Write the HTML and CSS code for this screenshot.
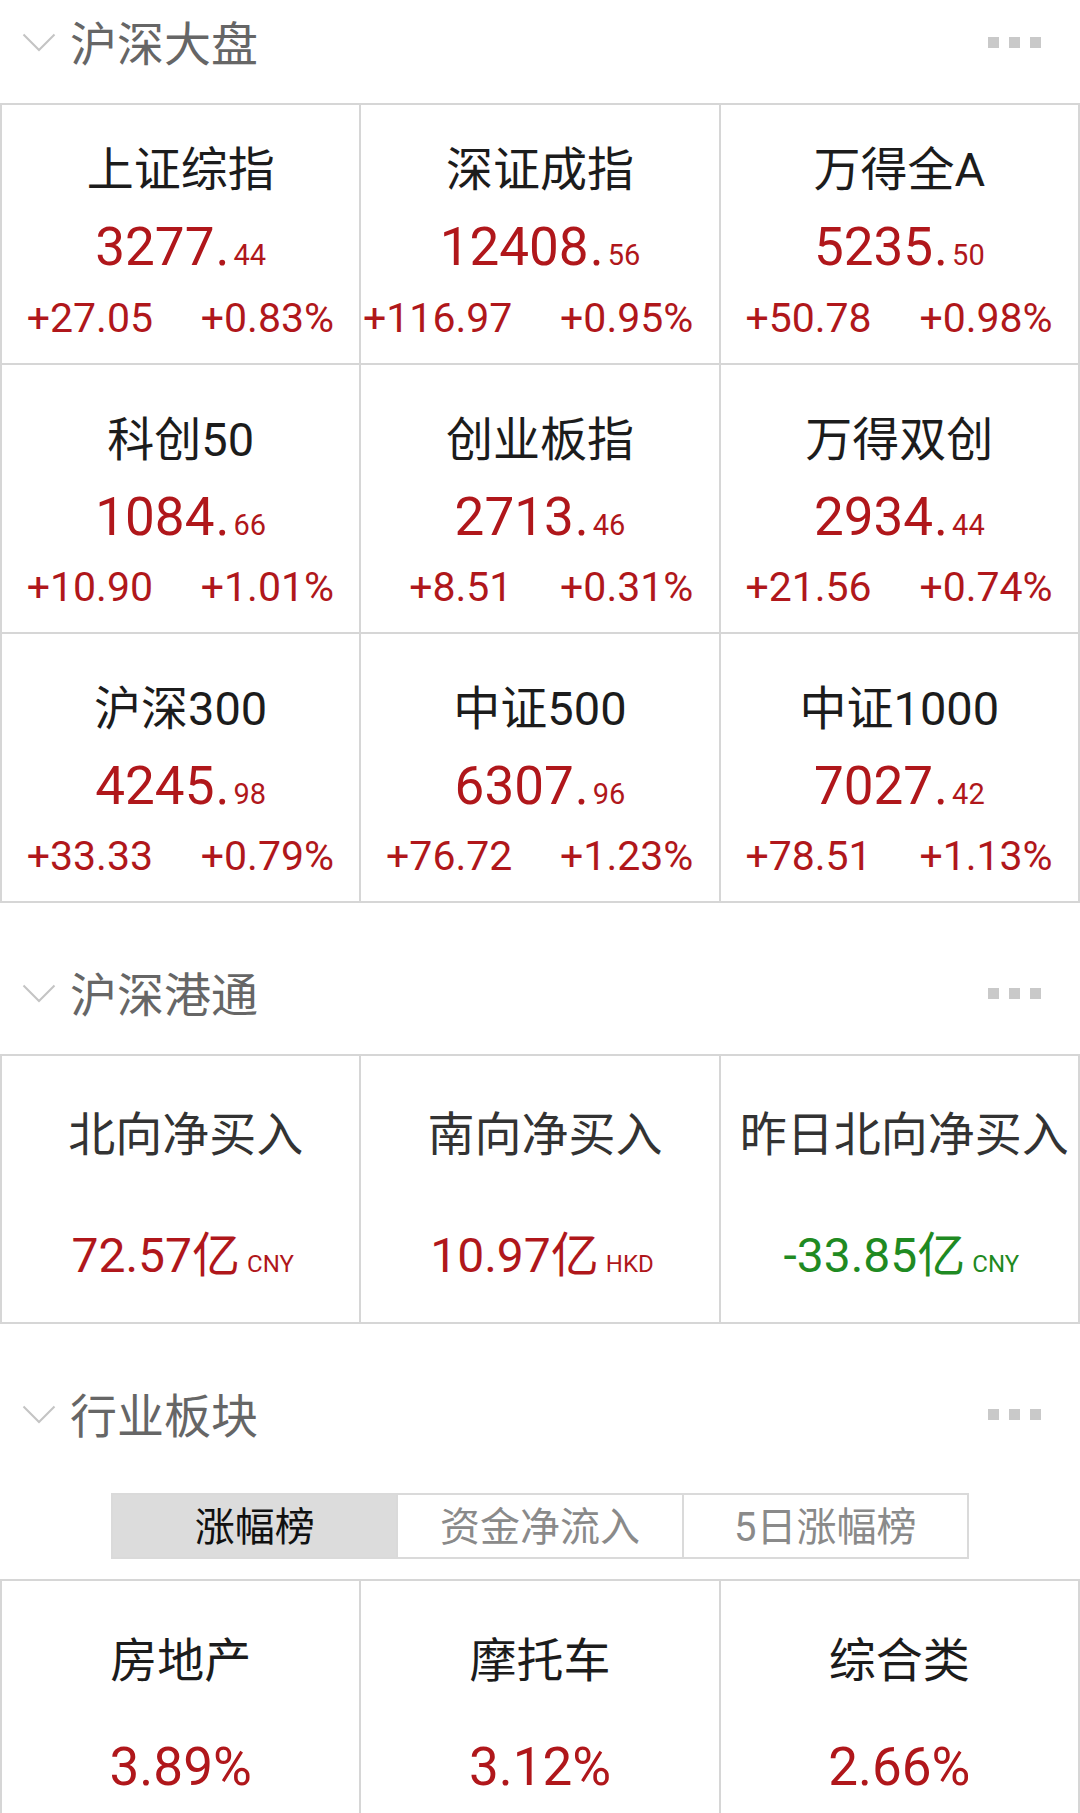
FILE: index.html
```html
<!DOCTYPE html>
<html lang="zh-CN">
<head>
<meta charset="utf-8">
<title>行情</title>
<link rel="stylesheet" href="styles.css">
</head>
<body>
<div class="page">

  <section class="section">
    <div class="sec-head">
      <svg class="chev" viewBox="0 0 34 19"><polyline points="1.5,1.5 17,17 32.5,1.5"/></svg>
      <div class="sec-title">沪深大盘</div>
      <div class="more"><i></i><i></i><i></i></div>
    </div>
    <div class="grid idx">
      <div class="cell r1"><div class="name">上证综指</div><div class="val"><span class="int">3277</span><span class="pt">.</span><span class="dec">44</span></div><div class="chg"><span>+27.05</span><span>+0.83%</span></div></div>
      <div class="cell r1"><div class="name">深证成指</div><div class="val"><span class="int">12408</span><span class="pt">.</span><span class="dec">56</span></div><div class="chg"><span>+116.97</span><span>+0.95%</span></div></div>
      <div class="cell r1"><div class="name">万得全A</div><div class="val"><span class="int">5235</span><span class="pt">.</span><span class="dec">50</span></div><div class="chg"><span>+50.78</span><span>+0.98%</span></div></div>

      <div class="cell"><div class="name">科创50</div><div class="val"><span class="int">1084</span><span class="pt">.</span><span class="dec">66</span></div><div class="chg"><span>+10.90</span><span>+1.01%</span></div></div>
      <div class="cell"><div class="name">创业板指</div><div class="val"><span class="int">2713</span><span class="pt">.</span><span class="dec">46</span></div><div class="chg"><span>+8.51</span><span>+0.31%</span></div></div>
      <div class="cell"><div class="name">万得双创</div><div class="val"><span class="int">2934</span><span class="pt">.</span><span class="dec">44</span></div><div class="chg"><span>+21.56</span><span>+0.74%</span></div></div>

      <div class="cell"><div class="name">沪深300</div><div class="val"><span class="int">4245</span><span class="pt">.</span><span class="dec">98</span></div><div class="chg"><span>+33.33</span><span>+0.79%</span></div></div>
      <div class="cell"><div class="name">中证500</div><div class="val"><span class="int">6307</span><span class="pt">.</span><span class="dec">96</span></div><div class="chg"><span>+76.72</span><span>+1.23%</span></div></div>
      <div class="cell"><div class="name">中证1000</div><div class="val"><span class="int">7027</span><span class="pt">.</span><span class="dec">42</span></div><div class="chg"><span>+78.51</span><span>+1.13%</span></div></div>
    </div>
  </section>

  <section class="section">
    <div class="sec-head">
      <svg class="chev" viewBox="0 0 34 19"><polyline points="1.5,1.5 17,17 32.5,1.5"/></svg>
      <div class="sec-title">沪深港通</div>
      <div class="more"><i></i><i></i><i></i></div>
    </div>
    <div class="grid hk">
      <div class="cell"><div class="name">北向净买入</div><div class="hk-val up">72.57亿<span class="cur">CNY</span></div></div>
      <div class="cell"><div class="name">南向净买入</div><div class="hk-val up">10.97亿<span class="cur">HKD</span></div></div>
      <div class="cell"><div class="name">昨日北向净买入</div><div class="hk-val down">-33.85亿<span class="cur">CNY</span></div></div>
    </div>
  </section>

  <section class="section">
    <div class="sec-head">
      <svg class="chev" viewBox="0 0 34 19"><polyline points="1.5,1.5 17,17 32.5,1.5"/></svg>
      <div class="sec-title">行业板块</div>
      <div class="more"><i></i><i></i><i></i></div>
    </div>
    <div class="tabs">
      <div class="tab active">涨幅榜</div>
      <div class="tab">资金净流入</div>
      <div class="tab">5日涨幅榜</div>
    </div>
    <div class="grid sector">
      <div class="cell"><div class="name">房地产</div><div class="sec-val">3.89%</div></div>
      <div class="cell"><div class="name">摩托车</div><div class="sec-val">3.12%</div></div>
      <div class="cell"><div class="name">综合类</div><div class="sec-val">2.66%</div></div>
    </div>
  </section>

</div>
</body>
</html>
```

FILE: styles.css
```css
html, body {
  margin: 0;
  padding: 0;
  background: #ffffff;
}

body {
  font-family: Roboto, "Noto Sans CJK SC", sans-serif;
  color: #1c1c1c;
}

.page {
  width: 1080px;
  height: 1813px;
  overflow: hidden;
}

.section + .section {
  margin-top: 48px;
}

/* section header */
.sec-head {
  height: 90px;
  display: flex;
  align-items: center;
  margin-bottom: 13px;
}

.chev {
  width: 34px;
  height: 19px;
  margin-left: 22px;
  margin-bottom: 6px;
  flex: none;
}

.chev polyline {
  fill: none;
  stroke: #c4c4c4;
  stroke-width: 2;
}

.sec-title {
  margin-left: 14px;
  font-size: 47px;
  line-height: 56px;
  color: #666666;
}

.more {
  margin-left: auto;
  margin-right: 39px;
  margin-bottom: 6px;
  display: flex;
  gap: 10px;
}

.more i {
  display: block;
  width: 11px;
  height: 11px;
  background: #c9c9c9;
}

/* grids */
.grid {
  display: grid;
  grid-template-columns: repeat(3, 1fr);
  border-top: 2px solid #d6d6d6;
  border-left: 2px solid #d6d6d6;
}

.cell {
  box-sizing: border-box;
  border-right: 2px solid #d6d6d6;
  border-bottom: 2px solid #d6d6d6;
  text-align: center;
}

.name {
  font-size: 47px;
  line-height: 56px;
  color: #1c1c1c;
  white-space: nowrap;
}

/* index grid */
.idx .cell {
  height: 269px;
  padding-top: 47px;
}

.idx .cell.r1 {
  height: 260px;
  padding-top: 37px;
}

.val {
  margin-top: 19px;
  font-size: 53px;
  line-height: 60px;
  color: #b0171b;
  white-space: nowrap;
}

.val .pt {
  margin-left: 1px;
}

.val .dec {
  font-size: 29px;
  line-height: 1;
  margin-left: 4px;
}

.chg {
  margin-top: 16px;
  display: grid;
  grid-template-columns: 151px 181px;
  font-size: 41px;
  line-height: 48px;
  color: #b0171b;
  text-align: right;
  white-space: nowrap;
}

.idx .cell.r1 .chg {
  margin-top: 17px;
}

/* hk connect grid */
.hk .cell {
  height: 268px;
  padding-top: 51px;
}

.hk .name {
  color: #333333;
  padding-left: 10px;
}

.hk-val {
  margin-top: 63px;
  padding-left: 4px;
  font-size: 48px;
  line-height: 60px;
  white-space: nowrap;
}

.hk-val .cur {
  font-size: 24px;
  line-height: 1;
  margin-left: 7px;
}

.up {
  color: #b0171b;
}

.down {
  color: #1f8a22;
}

/* tabs */
.tabs {
  width: 858px;
  height: 66px;
  margin: 31px auto 20px;
  box-sizing: border-box;
  display: flex;
  border: 2px solid #dadada;
}

.tab {
  flex: 1;
  display: flex;
  align-items: center;
  justify-content: center;
  padding-top: 4px;
  box-sizing: border-box;
  font-size: 40px;
  line-height: 48px;
  color: #8a8a8a;
}

.tab + .tab {
  border-left: 2px solid #dadada;
}

.tab.active {
  background: #dcdcdc;
  color: #111111;
}

/* sector grid */
.sector .cell {
  height: 270px;
  padding-top: 52px;
}

.sec-val {
  margin-top: 46px;
  font-size: 53px;
  line-height: 64px;
  color: #b0171b;
}
```
